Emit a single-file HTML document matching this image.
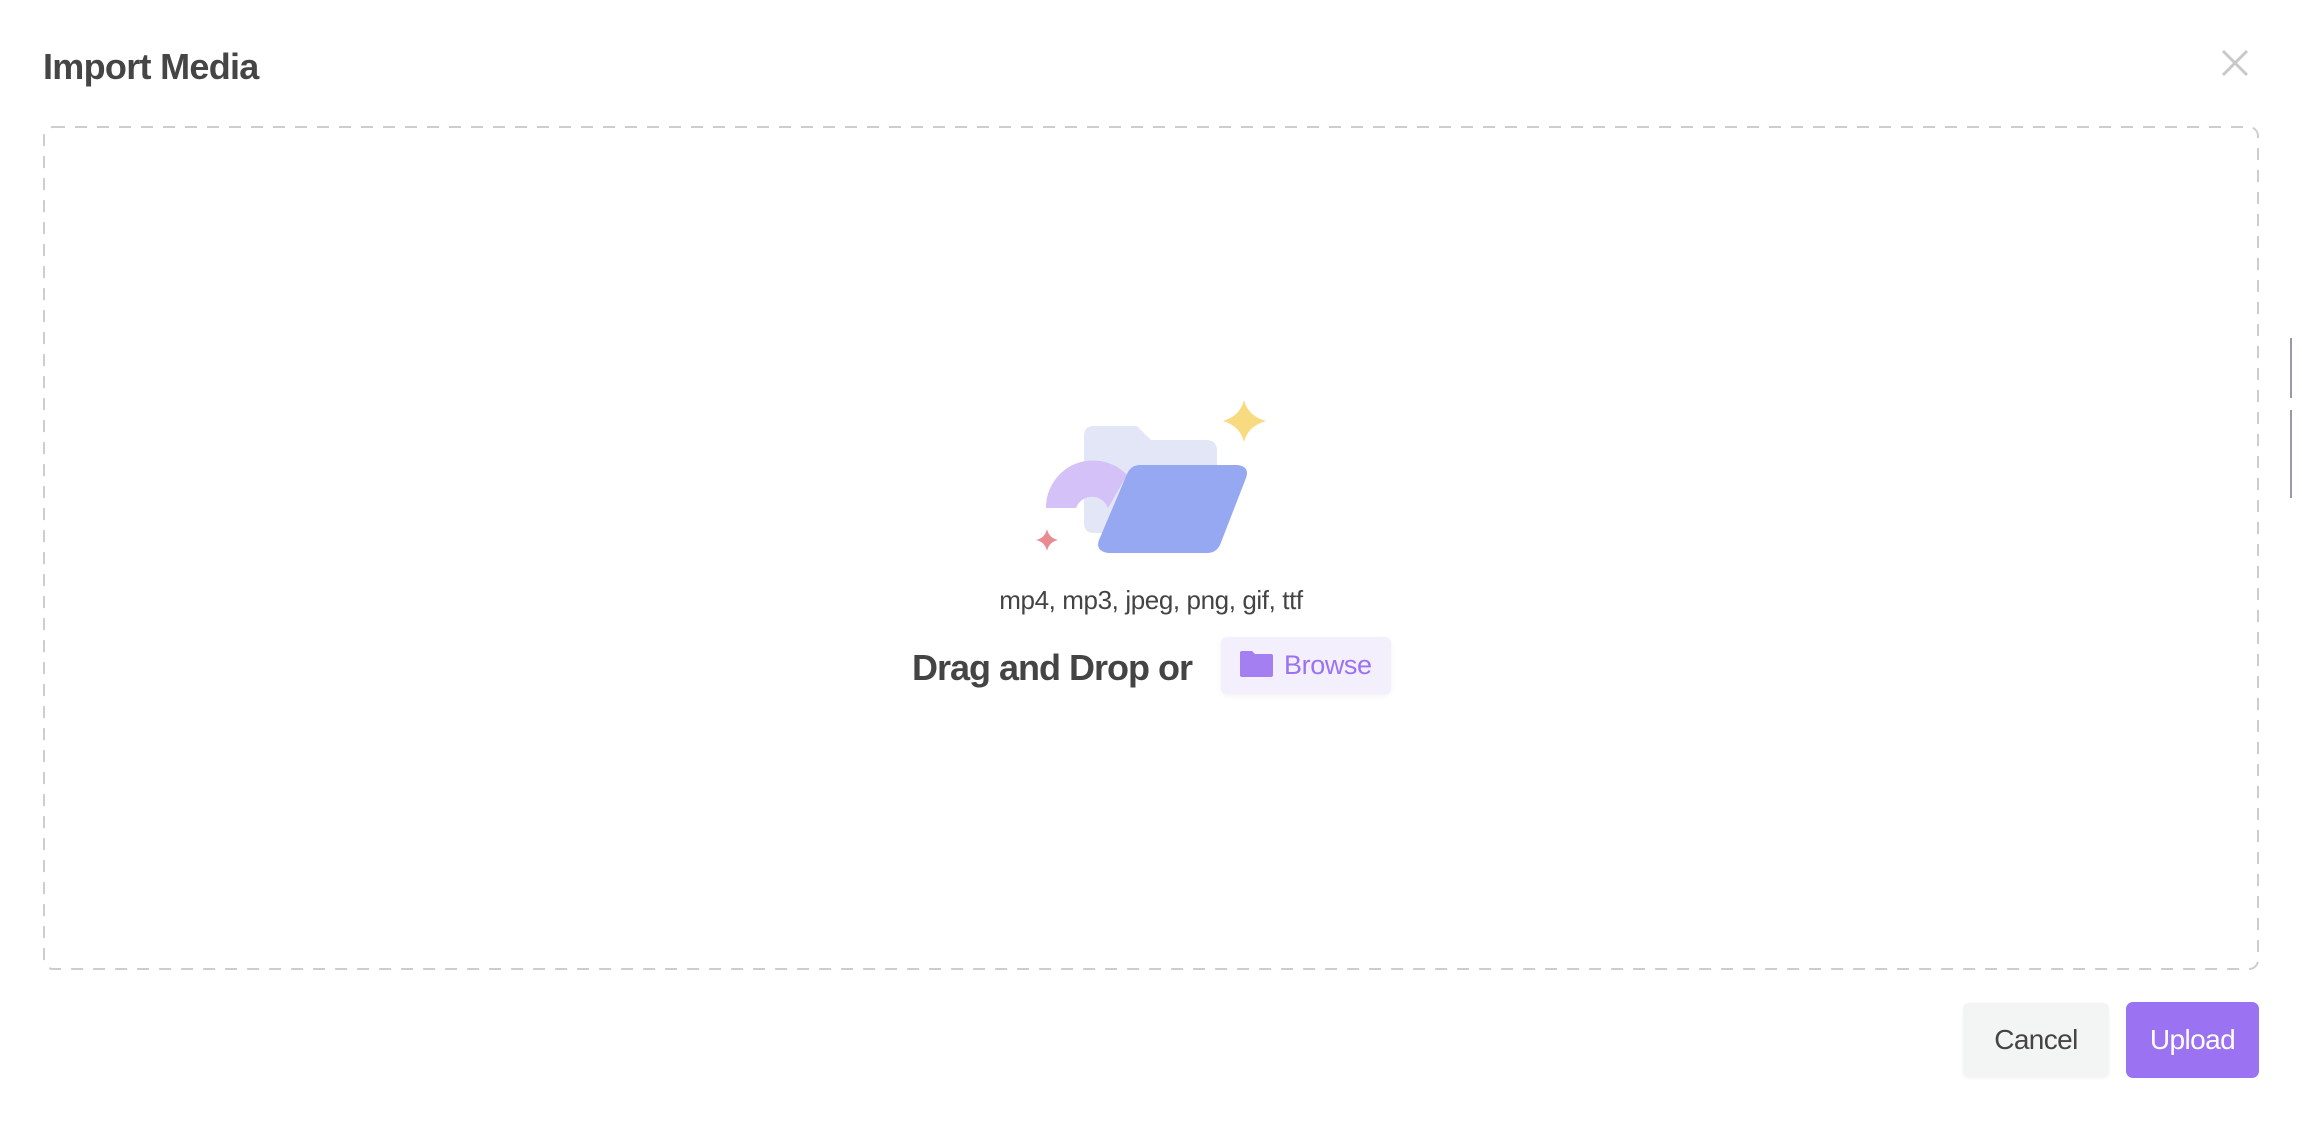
<!DOCTYPE html>
<html><head><meta charset="utf-8"><style>
html,body{margin:0;padding:0;background:#fff;width:2302px;height:1124px;overflow:hidden;font-family:"Liberation Sans",sans-serif;color:#444;}
.abs{position:absolute;white-space:nowrap;}
</style></head><body>
<div class="abs" style="left:43px;top:46px;font-size:36px;font-weight:bold;letter-spacing:-0.7px;color:#454545;">Import Media</div>
<svg class="abs" style="left:2220px;top:48px" width="30" height="30" viewBox="0 0 30 30"><path d="M3 3L27 27M27 3L3 27" stroke="#c8c8c8" stroke-width="3"/></svg>
<svg class="abs" style="left:0;top:0" width="2302" height="1124">
<rect x="44" y="127" width="2214" height="842" rx="9" fill="none" stroke="#cdcdcd" stroke-width="2" stroke-dasharray="12 10"/>
<line x1="2291" y1="338" x2="2291" y2="398" stroke="#7a7690" stroke-width="1.5"/>
<line x1="2291" y1="410" x2="2291" y2="498" stroke="#7a7690" stroke-width="1.5"/>
<path d="M1094 426H1137L1151 440H1206Q1217 440 1217 451V533H1094Q1084 533 1084 523V436Q1084 426 1094 426Z" fill="#e3e6f7"/>
<path d="M1046 508A47 47 0 0 1 1127 475L1108 508A17 17 0 0 0 1076 508Z" fill="#d4c1f7"/>
<path d="M1140 465H1238Q1250 467 1246 478L1220 545Q1216 553 1207 553H1108Q1095 551 1099 540L1127 474Q1131 465 1140 465Z" fill="#97a8f3"/>
<path d="M1244 400Q1248 416 1266 421Q1248 426 1244 442Q1240 426 1223 421Q1240 416 1244 400Z" fill="#f8da80"/>
<path d="M1047 529Q1049 538 1058 540Q1049 542 1047 551Q1045 542 1036 540Q1045 538 1047 529Z" fill="#ea8b93"/>
</svg>
<div class="abs" style="left:950px;top:585px;width:402px;text-align:center;font-size:26px;letter-spacing:-0.4px;color:#444;">mp4, mp3, jpeg, png, gif, ttf</div>
<div class="abs" style="left:912px;top:647px;font-size:36px;font-weight:bold;letter-spacing:-1px;color:#444;">Drag and Drop or</div>
<div class="abs" style="left:1221px;top:637px;width:170px;height:57px;background:#f3effd;border-radius:6px;box-shadow:0 2px 6px rgba(0,0,0,0.05);">
<svg class="abs" style="left:19px;top:14px" width="33" height="26" viewBox="0 0 33 26"><path d="M2 0H12L15 3H31Q33 3 33 5V24Q33 26 31 26H2Q0 26 0 24V2Q0 0 2 0Z" fill="#a47ff2"/></svg>
<div class="abs" style="left:63px;top:13px;font-size:27px;color:#9b72f2;letter-spacing:-0.4px;">Browse</div>
</div>
<div class="abs" style="left:1963px;top:1003px;width:146px;height:74px;background:#f3f4f4;border-radius:6px;box-shadow:0 1px 3px rgba(0,0,0,0.06);text-align:center;line-height:74px;font-size:28px;color:#444;letter-spacing:-0.6px;">Cancel</div>
<div class="abs" style="left:2126px;top:1002px;width:133px;height:76px;background:#9b72f2;border-radius:7px;text-align:center;line-height:76px;font-size:28px;color:#fff;letter-spacing:-0.6px;">Upload</div>
</body></html>
